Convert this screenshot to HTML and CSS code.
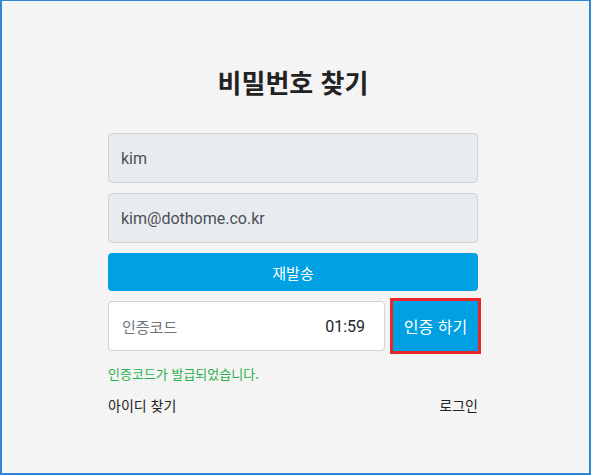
FILE: index.html
```html
<!doctype html>
<html lang="ko"><head>
	<title>비밀번호 찾기</title>
	<meta charset="utf-8">
	<link rel="stylesheet" href="styles.css">
</head><body>
	<div class="frame">
		<div class="box">
			<h1>비밀번호 찾기</h1>
			<div class="field">kim</div>
			<div class="field">kim@dothome.co.kr</div>
			<button type="button" class="btn resend">재발송</button>
			<div class="code-row">
				<div class="code-input">
					<span class="placeholder">인증코드</span>
					<span class="timer">01:59</span>
				</div>
				<button type="button" class="btn verify">인증 하기</button>
			</div>
			<p class="notice">인증코드가 발급되었습니다.</p>
			<div class="links">
				<a href="#">아이디 찾기</a>
				<a href="#">로그인</a>
			</div>
		</div>
	</div>
</body></html>
```

FILE: styles.css
```css
body {
	margin: 0;
	background: #f4f4f4;
	font-family: Roboto, 'Noto Sans CJK KR', sans-serif;
	color: #222;
}

.frame {
	height: 475px;
	box-sizing: border-box;
	border: 2px solid #2f86d6;
	border-top-width: 1px;
	padding: 63px 5px 0 0;
	background: #f4f4f4;
}

.box {
	width: 370px;
	margin: 0 auto;
	display: flex;
	flex-direction: column;
}

h1 {
	margin: 0 0 33px;
	font: bold 26px/36px 'Noto Sans CJK KR', sans-serif;
	text-align: center;
	color: #222;
}

.field {
	height: 50px;
	box-sizing: border-box;
	margin-bottom: 10px;
	padding: 0 12px;
	display: flex;
	align-items: center;
	background: #e9ecef;
	border: 1px solid #ced4da;
	border-radius: 4px;
	font-size: 16px;
	color: #495057;
}

.btn {
	border: 0;
	border-radius: 4px;
	background: #00a0e3;
	color: #fff;
	font-family: 'Noto Sans CJK KR', sans-serif;
	padding: 0;
	cursor: pointer;
}

.resend {
	height: 38px;
	font-size: 15px;
}

.code-row {
	display: flex;
	gap: 8px;
	margin-top: 10px;
}

.code-input {
	flex: 0 0 277px;
	height: 50px;
	box-sizing: border-box;
	padding: 0 19px 0 13px;
	display: flex;
	align-items: center;
	justify-content: space-between;
	background: #fff;
	border: 1px solid #ced4da;
	border-radius: 4px;
}

.placeholder {
	font: 15px 'Noto Sans CJK KR', sans-serif;
	color: #6c757d;
}

.timer {
	font: 16px Roboto, sans-serif;
	color: #212529;
}

.verify {
	flex: 1;
	height: 50px;
	border-radius: 0;
	outline: 3px solid #e8262b;
	font-size: 16px;
}

.notice {
	margin: 14px 0 0;
	font: 13px/18px 'Noto Sans CJK KR', sans-serif;
	color: #2ab04a;
}

.links {
	margin-top: 12px;
	display: flex;
	justify-content: space-between;
	font: 14px/20px 'Noto Sans CJK KR', sans-serif;
}

.links a {
	color: #222;
	text-decoration: none;
}
```
